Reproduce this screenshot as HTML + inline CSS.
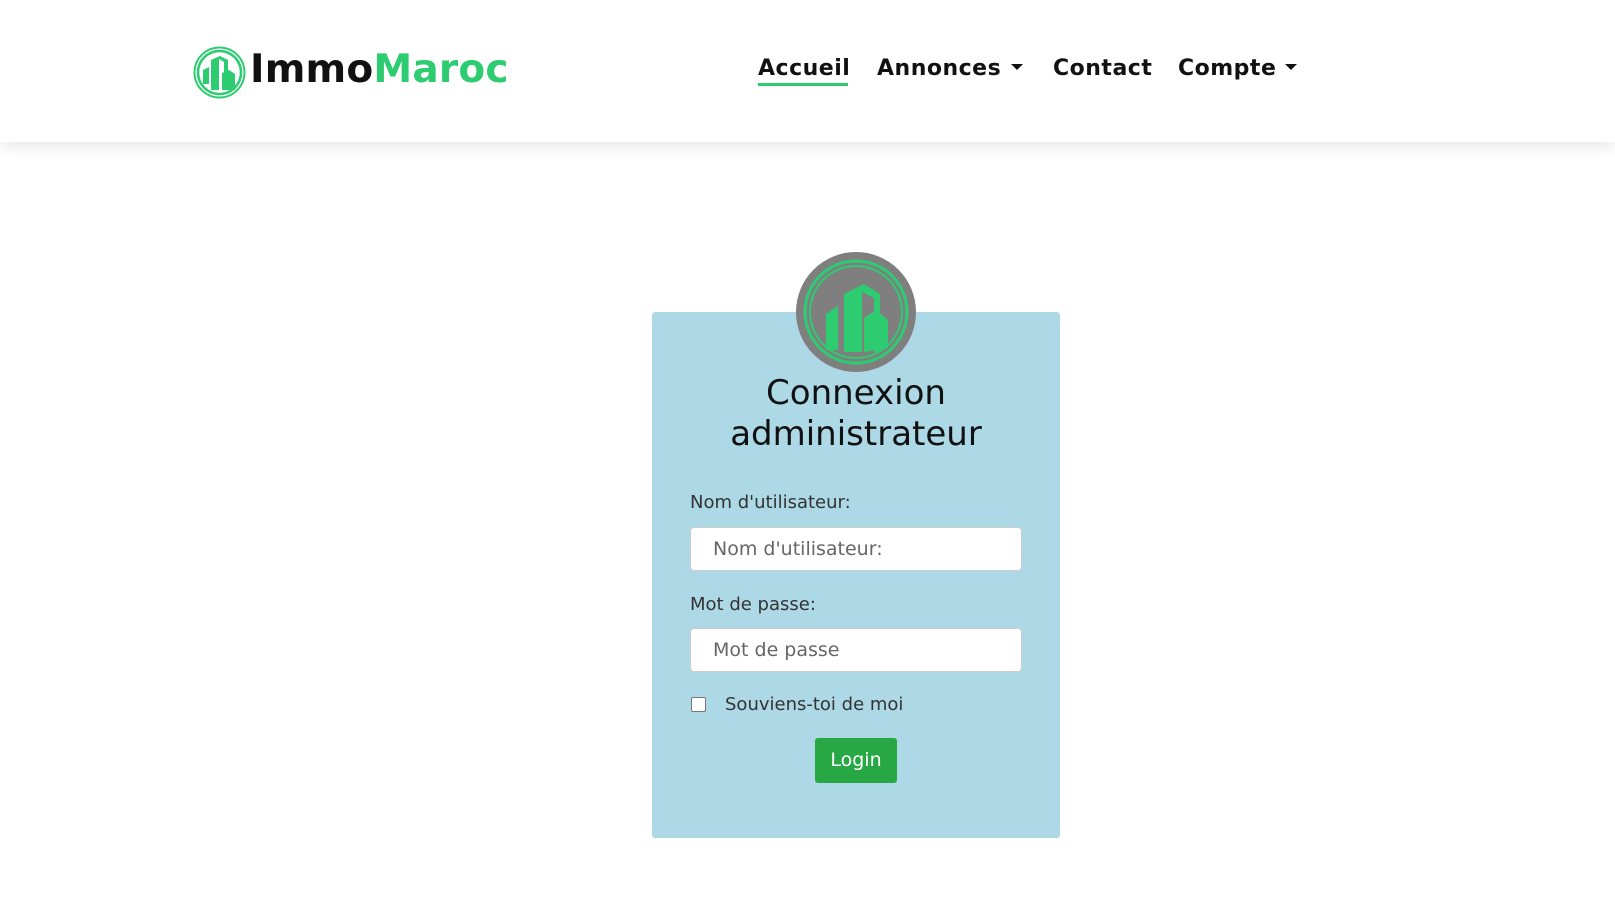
<!DOCTYPE html>
<html><head><meta charset="utf-8"><style>
body{margin:0;width:1615px;height:900px;background:#fff;font-family:"DejaVu Sans",Verdana,sans-serif;position:relative;overflow:hidden}
.hdr{position:absolute;left:0;top:0;width:1615px;height:142px;background:#fff;box-shadow:0 4px 14px rgba(0,0,0,.1)}
.abs{position:absolute}
.brand{left:250px;top:47px;font-size:39px;font-weight:bold;letter-spacing:0.2px}
.nav{top:56px;font-size:22px;font-weight:bold;color:#111;letter-spacing:0.5px}
.caret{width:0;height:0;border-left:6px solid transparent;border-right:6px solid transparent;border-top:6px solid #111}
.card{left:652px;top:312px;width:408px;height:526px;background:#add8e6;border-radius:3px}
.lbl{font-size:18px;color:#333}
.inp{background:#fff;border:1px solid #ccc;border-radius:4px;font-size:19px;color:#666;padding-left:22px;box-sizing:border-box;line-height:42px}
</style></head><body>
<div class="hdr"></div>
<svg class="abs" style="left:193px;top:46px" width="53" height="53" viewBox="0 0 53 53">
<circle cx="26.5" cy="26.5" r="25" fill="none" stroke="#2ecc71" stroke-width="2"/>
<circle cx="26.5" cy="26.5" r="21.5" fill="none" stroke="#2ecc71" stroke-width="2.5"/>
<path d="M10 38V24l6-3v17zM18 44V14l9-4 8 4v30h-4V16l-5-3v31zM29 44V27l7-3 6 4v16z" fill="#2ecc71"/>
</svg>
<div class="abs brand"><span style="color:#111">Immo</span><span style="color:#2ecc71">Maroc</span></div>
<div class="abs nav" style="left:758px">Accueil</div>
<div class="abs" style="left:758px;top:83px;width:90px;height:3px;background:#2ecc71"></div>
<div class="abs nav" style="left:877px">Annonces</div>
<div class="abs caret" style="left:1011px;top:64px"></div>
<div class="abs nav" style="left:1053px">Contact</div>
<div class="abs nav" style="left:1178px">Compte</div>
<div class="abs caret" style="left:1285px;top:64px"></div>

<div class="abs card"></div>
<svg class="abs" style="left:796px;top:252px" width="120" height="120" viewBox="0 0 120 120">
<circle cx="60" cy="60" r="60" fill="#7f7f7f"/>
<circle cx="60" cy="60" r="51" fill="none" stroke="#2ecc71" stroke-width="3"/>
<circle cx="60" cy="60" r="46" fill="none" stroke="#2ecc71" stroke-width="2"/>
<path d="M30 98V62l12-8v44zM48 100V42l20-10 16 10v58h-6V46l-12-6v60zM68 100V66l12-8 12 10v28z" fill="#2ecc71"/>
</svg>
<div class="abs" style="left:652px;width:408px;top:373px;text-align:center;font-size:34px;line-height:41px;color:#111">Connexion<br>administrateur</div>
<div class="abs lbl" style="left:690px;top:492px">Nom d'utilisateur:</div>
<div class="abs inp" style="left:690px;top:527px;width:332px;height:44px">Nom d'utilisateur:</div>
<div class="abs lbl" style="left:690px;top:594px">Mot de passe:</div>
<div class="abs inp" style="left:690px;top:628px;width:332px;height:44px">Mot de passe</div>
<div class="abs" style="left:691px;top:697px;width:13px;height:13px;border:1px solid #767676;border-radius:2px;background:#fff"></div>
<div class="abs lbl" style="left:725px;top:694px">Souviens-toi de moi</div>
<div class="abs" style="left:815px;top:738px;width:82px;height:45px;background:#28a745;border-radius:3px;color:#fff;font-size:19px;text-align:center;line-height:45px">Login</div>
</body></html>
